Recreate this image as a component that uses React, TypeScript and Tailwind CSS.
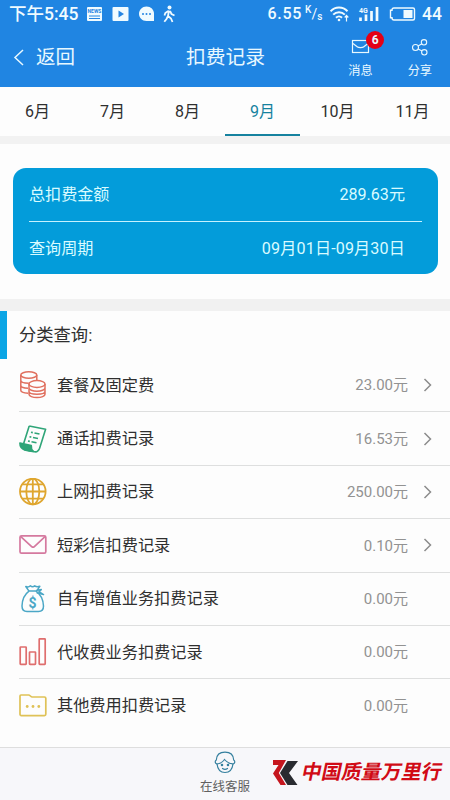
import type { ReactNode } from "react";

const months = ["6月", "7月", "8月", "9月", "10月", "11月"];

function CoinsIcon() {
  return (
    <svg width="28" height="28" viewBox="0 0 28 28" fill="none" stroke="#e0705f" strokeWidth="1.5">
      <ellipse cx="9.800" cy="4" rx="8" ry="3.200" />
      <path d="M1.800 4v15.300c0 1.500 2.500 2.700 7.200 2.900M17.800 4v5M1.800 9.200c0 1.700 3.400 3 8 3M1.800 14.300c0 1.700 3 2.900 7.200 3" />
      <ellipse cx="18" cy="13" rx="8" ry="3.400" fill="#fdfdfd" />
      <path d="M10 13v10.300c0 1.800 3.600 3.200 8 3.200s8-1.400 8-3.200V13M10 17c0 1.800 3.600 3.200 8 3.200s8-1.400 8-3.200M10 20.300c0 1.800 3.600 3 8 3s8-1.200 8-3" />
    </svg>
  );
}

function BillIcon() {
  return (
    <svg width="28" height="28" viewBox="0 0 28 28" fill="none" stroke="#2fa578" strokeWidth="1.6" strokeLinejoin="round">
      <path d="M10.200 1 26.600 4.200 20.600 23.200c-1 2.800-3.600 4.100-6.200 3.300L5 24.500M10.200 1 4.600 18.700" />
      <path d="M.9 18.100 12.300 20.600c-.2 2.600.5 4.700 2.100 5.900-2.600.2-6-.6-8.600-1.400C2.600 24 .9 21.400.9 18.100z" fill="#2fa578" />
      <path d="m12 7.200 1.800.4M15.500 8l5 1M10.500 11.700l1.800.4M14 12.500l5 1M9 16l1.800.4M12.500 16.800l5 1" />
    </svg>
  );
}

function GlobeIcon() {
  return (
    <svg width="28" height="28" viewBox="0 0 28 28" fill="none" stroke="#dfa62f" strokeWidth="1.800">
      <circle cx="13.800" cy="13.500" r="12.800" />
      <ellipse cx="13.800" cy="13.500" rx="6.500" ry="12.800" />
      <path d="M13.800.7v25.600M1 13.500h25.600M3.300 6.300h21M3.300 20.700h21" />
    </svg>
  );
}

function MailIcon() {
  return (
    <svg width="28" height="28" viewBox="0 0 28 28" fill="none" stroke="#d5799f" strokeWidth="1.700" strokeLinejoin="round">
      <rect x="1" y="4.800" width="25.800" height="17.400" rx="1.500" />
      <path d="m1.800 5.600 11.100 10.200c.8.6 1.500.6 2.200 0L26 5.600" />
    </svg>
  );
}

function MoneyBagIcon() {
  return (
    <svg width="28" height="28" viewBox="0 0 28 28" fill="none" stroke="#4ba7c6" strokeWidth="1.500" strokeLinejoin="round">
      <path d="M10 6.100C6 9 3.200 14.500 3 21c0 3.500 1.800 5.500 5 5.500h11.500c3.200 0 5-2 5-5.500-.3-6.500-3.300-12-7.500-14.900z" />
      <path d="M10 6.100 6.800 1.500c2 .8 3.400.5 4.600-.7 1.400 1.100 2.800 1.200 4.300 0 1.300 1 3 1.100 5.100.5l-3.300 4.800M17 5.400l5.300-.8-2.300 2 4.500 3-6.800-1.800" />
      <text x="13.600" y="22.600" textAnchor="middle" className="font-['Roboto',sans-serif] text-[14px] font-bold" fill="#4ba7c6" stroke="none">$</text>
    </svg>
  );
}

function BarsIcon() {
  return (
    <svg width="28" height="28" viewBox="0 0 28 28" fill="none" stroke="#df6e6e" strokeWidth="1.700" strokeLinejoin="round">
      <rect x="1.200" y="9" width="6" height="17.300" rx=".5" />
      <rect x="10.500" y="14" width="6" height="12.300" rx=".5" />
      <rect x="20.200" y=".9" width="6" height="25.400" rx=".5" />
    </svg>
  );
}

function FolderIcon() {
  return (
    <svg width="28" height="28" viewBox="0 0 28 28" fill="none" stroke="#dfc257" strokeWidth="1.700" strokeLinejoin="round">
      <path d="M1 22.300V4c0-.6.400-1 1-1h7.600c1.500 0 2.100 2 3.600 2h12.300c.8 0 1.300.5 1.300 1.200v16.100c0 .8-.5 1.300-1.300 1.300H2.200c-.7 0-1.200-.5-1.200-1.300z" />
      <g fill="#dfc257" stroke="none">
        <circle cx="8.200" cy="14.500" r="1.400" />
        <circle cx="14" cy="14.500" r="1.400" />
        <circle cx="19.800" cy="14.500" r="1.400" />
      </g>
    </svg>
  );
}

const records: { icon: ReactNode; label: string; amount: string; more: boolean }[] = [
  { icon: <CoinsIcon />, label: "套餐及固定费", amount: "23.00元", more: true },
  { icon: <BillIcon />, label: "通话扣费记录", amount: "16.53元", more: true },
  { icon: <GlobeIcon />, label: "上网扣费记录", amount: "250.00元", more: true },
  { icon: <MailIcon />, label: "短彩信扣费记录", amount: "0.10元", more: true },
  { icon: <MoneyBagIcon />, label: "自有增值业务扣费记录", amount: "0.00元", more: false },
  { icon: <BarsIcon />, label: "代收费业务扣费记录", amount: "0.00元", more: false },
  { icon: <FolderIcon />, label: "其他费用扣费记录", amount: "0.00元", more: false },
];

function StatusBar() {
  return (
    <div className="flex h-7 items-center pl-[9px] pr-2 font-medium leading-7 text-[#f0fbff]">
      <span className="w-[78px] whitespace-nowrap text-[17.500px]">下午5:45</span>
      <svg className="shrink-0" width="90" height="18" viewBox="0 0 90 18" fill="#f0fbff">
        <rect x="0" y="2" width="15" height="14" rx="1" />
        <path d="M2 11h11M2 13.500h11" stroke="#2585e2" strokeWidth="1" />
        <text x="7.500" y="8.300" textAnchor="middle" className="font-['Roboto',sans-serif] text-[5px] font-bold" fill="#2585e2">NEWS</text>
        <rect x="25.500" y="2" width="16" height="14" rx="1" />
        <path d="m31.500 5.500 5.500 3.500-5.500 3.500z" fill="#2585e2" />
        <path d="M59.500 1.500c4.300 0 7.500 3.200 7.500 7.200V16h-7.500C55 16 52 12.800 52 8.800s3.200-7.300 7.500-7.300z" />
        <g fill="#2585e2">
          <circle cx="56" cy="9" r="1" />
          <circle cx="59.500" cy="9" r="1" />
          <circle cx="63" cy="9" r="1" />
        </g>
        <circle cx="82.500" cy="2.500" r="2" />
        <path d="m82 5.500-1 5.500 3 2.500 1.500 3.500M81 11l-1.500 3-2.200 2.800M81.300 6l-3 2-.8 2.500M83 6l1.500 3 3 1.500" fill="none" stroke="#f0fbff" strokeWidth="1.800" />
      </svg>
      <span className="ml-auto text-base tracking-[0.700px]">6.55</span>
      <span className="ml-[3px] flex w-4 items-center text-[10px] leading-none">
        <span className="-mt-2">K</span>
        <span className="text-sm font-normal">/</span>
        <span className="mt-1.5">s</span>
      </span>
      <svg className="ml-[9px] shrink-0" width="86" height="18" viewBox="0 0 86 18" fill="none" stroke="#f0fbff" strokeWidth="2">
        <path d="M.5 6.300c4.700-5 12.300-5 17 0M3.200 9.600c3.200-3.300 8.400-3.300 11.600 0M6 12.700c1.700-1.700 4.300-1.700 6 0" />
        <circle cx="9" cy="15" r="1.300" fill="#f0fbff" stroke="none" />
        <path d="M16.500 10.500v6M14.700 12.500l1.800-2 1.800 2" strokeWidth="1.200" />
        <path d="M30.500 12.500V16M36 9.500V16M41.500 6v10M47 2v14" strokeWidth="2.700" />
        <text x="29" y="7.500" className="font-['Roboto',sans-serif] text-[7px] font-bold" fill="#f0fbff" stroke="none">4G</text>
        <path d="M64 3h19c1 0 1.500.6 1.500 1.500v9c0 1-.5 1.500-1.500 1.500H64c-1.500 0-2-1-2-2.200h-1.500V5.300H62C62 4 62.500 3 64 3z" strokeWidth="1.400" />
        <rect x="73.500" y="5" width="9" height="8" fill="#f0fbff" stroke="none" />
      </svg>
      <span className="ml-[6px] text-[17.500px]">44</span>
    </div>
  );
}

function Header() {
  return (
    <div className="grid h-[59px] grid-cols-[1fr_100px_1fr] text-[#e8f8ff]">
      <div className="flex items-center pl-[13px] text-[19.500px]">
        <svg className="mr-[11px]" width="12" height="17" viewBox="0 0 12 17" fill="none" stroke="currentColor" strokeWidth="1.500">
          <path d="M10 1 2 8.500 10 16" />
        </svg>
        返回
      </div>
      <div className="flex items-center justify-center pl-px text-[19.800px]">扣费记录</div>
      <div className="flex justify-end gap-[35px] pr-[18px] pt-2.5 text-[12.200px] leading-[18px]">
        <div className="relative flex flex-col items-center">
          <svg className="mb-[5px] mt-px" width="19" height="18" viewBox="0 0 19 18" fill="none" stroke="currentColor" strokeWidth="1.200">
            <rect x="1.500" y="1.500" width="16" height="12" />
            <path d="m2 4.500 4.500 3.500c1 .8 5 .8 6 0L17 4.500" />
          </svg>
          消息
          <span className="absolute -top-[7px] left-[18px] flex h-[18px] w-[18px] items-center justify-center rounded-full bg-[#e40015] text-[12px] font-bold">
            6
          </span>
        </div>
        <div className="flex flex-col items-center">
          <svg className="mb-[5px] mt-px" width="18" height="18" viewBox="0 0 18 18" fill="none" stroke="currentColor" strokeWidth="1.100">
            <circle cx="4.500" cy="8.500" r="3" />
            <circle cx="13" cy="3.300" r="2.700" />
            <circle cx="13.300" cy="13.300" r="2.700" />
            <path d="m7 7 4-2.200M7.100 10l4 2" />
          </svg>
          分享
        </div>
      </div>
    </div>
  );
}

function SiteMark() {
  return (
    <div className="absolute left-[273px] top-[756px] flex h-8 items-center">
      <svg width="26" height="27" viewBox="0 0 26 27">
        <path d="M0 1h13L5.800 14 13 26H7.500L0 14.500 5.500 6H0z" fill="#c5161e" />
        <path d="M14.500 2H25L16 14l8.500 12h-10L7 14z" fill="#292b30" />
      </svg>
      <span className="ml-[3px] -skew-x-12 whitespace-nowrap text-[20px] font-bold leading-8 text-[#d10b16]">
        中国质量万里行
      </span>
    </div>
  );
}

export default function App() {
  return (
    <div className="relative flex h-[800px] w-[450px] flex-col overflow-hidden bg-[#fdfdfd] font-['Roboto','Noto_Sans_CJK_SC',sans-serif] text-[#2f2f2f]">
      <header className="h-[87px] shrink-0 bg-[#2085e2]">
        <StatusBar />
        <Header />
      </header>

      <nav className="grid h-[49px] shrink-0 grid-cols-6">
        {months.map((month) => (
          <div
            key={month}
            className={
              month === "9月"
                ? "flex items-center justify-center border-b-2 border-[#16829f] pt-0.5 text-base text-[#16829f]"
                : "flex items-center justify-center border-b-2 border-transparent pt-0.5 text-base"
            }
          >
            {month}
          </div>
        ))}
      </nav>
      <div className="h-2 shrink-0 bg-[#f2f2f2]" />

      <section className="h-[155px] shrink-0 px-3 pl-[13px] pt-6 text-[16.100px] text-[#d9fbff]">
        <div className="h-[106px] rounded-[13px] bg-[#039cda] px-4">
          <div className="flex h-[54px] items-center justify-between border-b border-[#c5f2ff] pr-[17px] pt-0.5">
            <span>总扣费金额</span>
            <span>289.63元</span>
          </div>
          <div className="flex h-[52px] items-center justify-between pr-[17px] pt-0.5">
            <span>查询周期</span>
            <span className="tracking-[0.150px]">09月01日-09月30日</span>
          </div>
        </div>
      </section>
      <div className="h-3 shrink-0 bg-[#f1f1f1]" />

      <h2 className="flex h-12 shrink-0 items-center border-l-[7px] border-[#0ba5e5] pl-3 pt-0.5 text-[17.300px]">分类查询:</h2>

      <ul className="shrink-0 pl-[19px]">
        {records.map((record) => (
          <li key={record.label} className="flex h-[53.400px] items-center border-b border-[#dedfdf] pr-4 last:border-0">
            {record.icon}
            <span className="ml-[10px] flex-1 pt-px text-[16.200px]">{record.label}</span>
            <span className="pt-px text-[15px] text-[#929292]">{record.amount}</span>
            <svg className="ml-[14px]" width="12" height="14" viewBox="0 0 12 14" fill="none" stroke="#8c8c8c" strokeWidth="1.500">
              {record.more && <path d="m2.500 1 6 6-6 6" />}
            </svg>
          </li>
        ))}
      </ul>

      <footer className="mt-auto flex h-[53px] shrink-0 flex-col items-center border-t border-[#dedede] bg-[#f7f7fa] pt-[3px] text-[12.500px] leading-[18px] text-[#606060]">
        <svg className="mb-[4px] shrink-0" width="22" height="23" viewBox="0 0 22 23" fill="none" stroke="#347f9e" strokeWidth="1.200" strokeLinecap="round">
          <path d="M3 13C.8 12.500.8 9.700 2.300 9 2.600 4 6 1.200 11 1.200S19.400 4 19.700 9c1.500.7 1.500 3.500-.7 4" />
          <path d="M3 13c2.800-.3 5.500-1.700 7.500-4.500 1.800 2.400 4.500 3.900 8.500 4.500-.6 5-3.500 8.500-8 8.500S3.600 18 3 13z" />
          <path d="M8.500 17.500c1.500 1 3.500 1 5 0" />
          <circle cx="8" cy="14" r=".7" fill="#347f9e" />
          <circle cx="14" cy="14" r=".7" fill="#347f9e" />
        </svg>
        在线客服
      </footer>

      <SiteMark />
    </div>
  );
}
